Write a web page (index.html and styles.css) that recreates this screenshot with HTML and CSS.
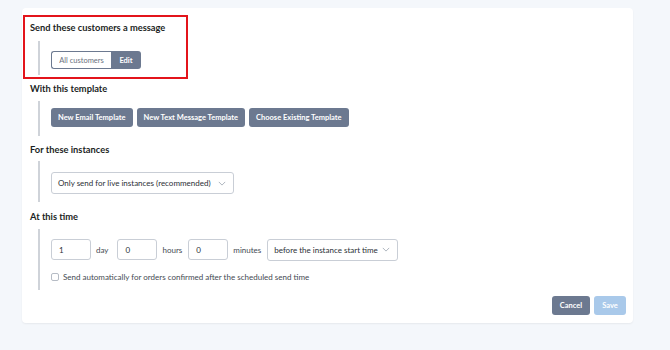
FILE: index.html
```html
<!DOCTYPE html>
<html lang="en">
<head>
    <meta charset="UTF-8">
    <meta name="viewport" content="width=device-width, initial-scale=1.0">
    <title>Message schedule</title>
    <link rel="stylesheet" href="styles.css">
</head>
<body>
    <div class="card">
        <!-- recipients -->
        <div class="section section-marked">
            <h3 class="section-title">Send these customers a message</h3>
            <div class="section-body body-recipients">
                <div class="btn-group">
                    <span class="group-label">All customers</span>
                    <button class="btn btn-slate group-btn">Edit</button>
                </div>
            </div>
        </div>

        <!-- template -->
        <div class="section section-template">
            <h3 class="section-title">With this template</h3>
            <div class="section-body body-template">
                <div class="btn-row">
                    <button class="btn btn-slate">New Email Template</button>
                    <button class="btn btn-slate">New Text Message Template</button>
                    <button class="btn btn-slate">Choose Existing Template</button>
                </div>
            </div>
        </div>

        <!-- instances -->
        <div class="section section-instances">
            <h3 class="section-title">For these instances</h3>
            <div class="section-body body-instances">
                <div class="select select-wide">
                    <span>Only send for live instances (recommended)</span>
                    <svg class="chevron" viewBox="0 0 10 6" width="8" height="5"><path d="M1 1l4 4 4-4" fill="none" stroke="#9aa3ae" stroke-width="1"/></svg>
                </div>
            </div>
        </div>

        <!-- time -->
        <div class="section section-time">
            <h3 class="section-title">At this time</h3>
            <div class="section-body body-time">
                <div class="time-row">
                    <input class="num-input" type="text" value="1">
                    <span class="unit unit-day">day</span>
                    <input class="num-input" type="text" value="0">
                    <span class="unit">hours</span>
                    <input class="num-input" type="text" value="0">
                    <span class="unit">minutes</span>
                    <div class="select select-when">
                        <span>before the instance start time</span>
                        <svg class="chevron" viewBox="0 0 10 6" width="8" height="5"><path d="M1 1l4 4 4-4" fill="none" stroke="#9aa3ae" stroke-width="1"/></svg>
                    </div>
                </div>
                <label class="check-row">
                    <span class="checkbox"></span>
                    Send automatically for orders confirmed after the scheduled send time
                </label>
            </div>
        </div>

        <div class="card-footer">
            <button class="btn btn-slate btn-cancel">Cancel</button>
            <button class="btn btn-disabled btn-save">Save</button>
        </div>
    </div>
</body>
</html>
```

FILE: styles.css
```css
* {
    box-sizing: border-box;
    margin: 0;
    padding: 0;
}
body {
    font-family: Lato, 'Noto Sans', sans-serif;
    background: #f4f7fb;
    padding: 8px 37px 28px 22px;
    color: #2b2f36;
    font-size: 8px;
    white-space: nowrap;
}
/* main card */
.card {
    background: #fff;
    border-radius: 4px;
    padding: 7px 7px 8px 0;
    box-shadow: 0 1px 2px rgba(0,0,0,0.06);
}
.section {
    padding-left: 8px;
}
.section-marked {
    width: 165px;
    margin-left: 1px;
    padding: 3px 0 2px 5px;
    border: 2px solid #e3141b;
}
.section-title {
    font-size: 9.3px;
    font-weight: 700;
    color: #1c1f24;
    line-height: 16px;
}
.section-template {
    margin-top: 2px;
}
.section-instances {
    margin-top: 6px;
}
.section-time {
    margin-top: 7px;
}
.section-body {
    margin-left: 8px;
    border-left: 2px solid #cfd3d9;
    padding-left: 11px;
}
.body-recipients {
    margin-top: 5px;
    padding-top: 10px;
    padding-bottom: 6px;
}
.body-template {
    margin-top: 4px;
    padding-top: 7px;
    padding-bottom: 9px;
}
.body-instances {
    margin-top: 3px;
    padding-top: 11px;
    padding-bottom: 8px;
}
.body-time {
    margin-top: 4px;
    padding-top: 10px;
    padding-bottom: 8px;
}
/* buttons */
.btn {
    font-family: inherit;
    font-size: 7.5px;
    font-weight: 700;
    border: none;
    border-radius: 3px;
    color: #fff;
    cursor: pointer;
}
.btn-slate {
    background: #6c7990;
}
.btn-disabled {
    background: #a9c9ea;
}
.btn-row {
    display: flex;
    gap: 4px;
}
.btn-row .btn {
    height: 19px;
    padding: 0 7px;
}
.btn-group {
    display: flex;
    height: 18px;
}
.group-label {
    display: flex;
    align-items: center;
    width: 60px;
    justify-content: center;
    border: 1px solid #6c7990;
    border-right: none;
    border-radius: 3px 0 0 3px;
    color: #6b7280;
    font-size: 7.5px;
}
.group-btn {
    width: 30px;
    border-radius: 0 3px 3px 0;
}
/* selects and inputs */
.select {
    display: flex;
    align-items: center;
    justify-content: space-between;
    height: 22px;
    border: 1px solid #c9ced6;
    border-radius: 3px;
    padding: 0 7px 0 6px;
    color: #2b2f36;
}
.select-wide {
    width: 183px;
}
.select-when {
    width: 131px;
}
.time-row {
    display: flex;
    align-items: center;
    height: 21px;
}
.num-input {
    width: 40px;
    height: 21px;
    border: 1px solid #c9ced6;
    border-radius: 3px;
    padding: 0 7px;
    font-family: inherit;
    font-size: 8px;
    color: #2b2f36;
}
.unit {
    padding: 0 6px 0 5px;
    color: #444a52;
}
.unit-day {
    padding-right: 9px;
}
.check-row {
    display: flex;
    align-items: center;
    gap: 4px;
    height: 11px;
    margin-top: 11px;
    color: #444a52;
}
.checkbox {
    width: 8px;
    height: 8px;
    border: 1px solid #b6bcc5;
    border-radius: 2px;
}
/* footer */
.card-footer {
    display: flex;
    justify-content: flex-end;
    gap: 4px;
    margin-top: 6px;
}
.btn-cancel,
.btn-save {
    height: 19px;
}
.btn-cancel {
    width: 38px;
}
.btn-save {
    width: 32px;
}
```
